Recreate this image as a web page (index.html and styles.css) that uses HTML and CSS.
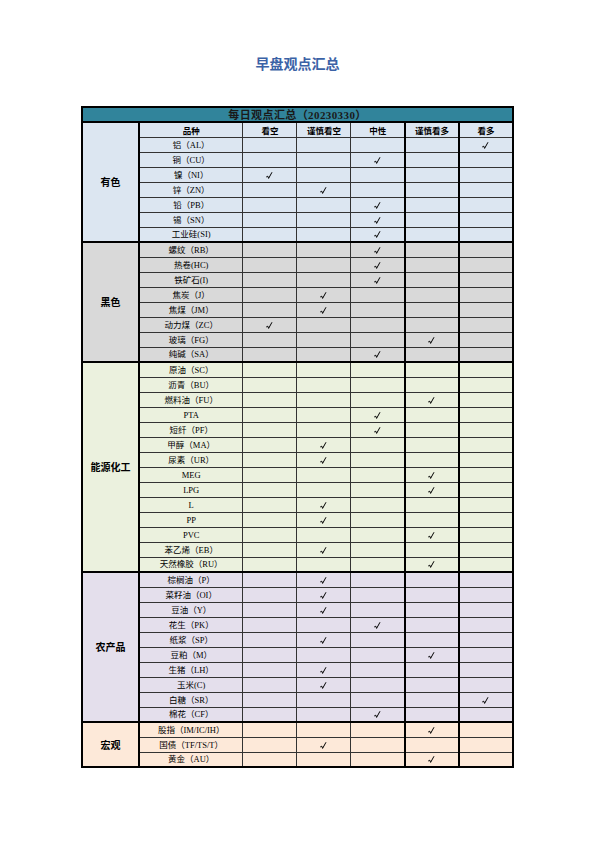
FILE: index.html
```html
<!DOCTYPE html>
<html lang="zh">
<head>
<meta charset="utf-8">
<title>早盘观点汇总</title>
<link rel="stylesheet" href="styles.css">
</head>
<body>
<div class="page">
  <h1 class="title">早盘观点汇总</h1>
  <table class="sheet">
    <colgroup>
      <col class="c-cat"><col class="c-name"><col class="c-v"><col class="c-v"><col class="c-v"><col class="c-v"><col class="c-v">
    </colgroup>
    <tr class="bar"><td colspan="7">每日观点汇总（20230330）</td></tr>
    <tr class="g1 head">
      <td class="cat" rowspan="8">有色</td>
      <td>品种</td><td>看空</td><td>谨慎看空</td><td class="bl">中性</td><td class="bk">谨慎看多</td><td class="bk">看多</td>
    </tr>
    <tr class="g1"><td class="name">铝（AL）</td><td></td><td></td><td class="bl"></td><td class="bk"></td><td class="bk"><svg class="ck" viewBox="0 0 7 7"><path d="M0.6 4.8L1.8 4.2L2.6 6.4L5.8 0.6"/></svg></td></tr>
    <tr class="g1"><td class="name">铜（CU）</td><td></td><td></td><td class="bl"><svg class="ck" viewBox="0 0 7 7"><path d="M0.6 4.8L1.8 4.2L2.6 6.4L5.8 0.6"/></svg></td><td class="bk"></td><td class="bk"></td></tr>
    <tr class="g1"><td class="name">镍（NI）</td><td><svg class="ck" viewBox="0 0 7 7"><path d="M0.6 4.8L1.8 4.2L2.6 6.4L5.8 0.6"/></svg></td><td></td><td class="bl"></td><td class="bk"></td><td class="bk"></td></tr>
    <tr class="g1"><td class="name">锌（ZN）</td><td></td><td><svg class="ck" viewBox="0 0 7 7"><path d="M0.6 4.8L1.8 4.2L2.6 6.4L5.8 0.6"/></svg></td><td class="bl"></td><td class="bk"></td><td class="bk"></td></tr>
    <tr class="g1"><td class="name">铅（PB）</td><td></td><td></td><td class="bl"><svg class="ck" viewBox="0 0 7 7"><path d="M0.6 4.8L1.8 4.2L2.6 6.4L5.8 0.6"/></svg></td><td class="bk"></td><td class="bk"></td></tr>
    <tr class="g1"><td class="name">锡（SN）</td><td></td><td></td><td class="bl"><svg class="ck" viewBox="0 0 7 7"><path d="M0.6 4.8L1.8 4.2L2.6 6.4L5.8 0.6"/></svg></td><td class="bk"></td><td class="bk"></td></tr>
    <tr class="g1"><td class="name">工业硅(SI)</td><td></td><td></td><td class="bl"><svg class="ck" viewBox="0 0 7 7"><path d="M0.6 4.8L1.8 4.2L2.6 6.4L5.8 0.6"/></svg></td><td class="bk"></td><td class="bk"></td></tr>

    <tr class="g2 first"><td class="cat" rowspan="8">黑色</td><td class="name">螺纹（RB）</td><td></td><td></td><td class="bl"><svg class="ck" viewBox="0 0 7 7"><path d="M0.6 4.8L1.8 4.2L2.6 6.4L5.8 0.6"/></svg></td><td class="bk"></td><td class="bk"></td></tr>
    <tr class="g2"><td class="name">热卷(HC)</td><td></td><td></td><td class="bl"><svg class="ck" viewBox="0 0 7 7"><path d="M0.6 4.8L1.8 4.2L2.6 6.4L5.8 0.6"/></svg></td><td class="bk"></td><td class="bk"></td></tr>
    <tr class="g2"><td class="name">铁矿石(I)</td><td></td><td></td><td class="bl"><svg class="ck" viewBox="0 0 7 7"><path d="M0.6 4.8L1.8 4.2L2.6 6.4L5.8 0.6"/></svg></td><td class="bk"></td><td class="bk"></td></tr>
    <tr class="g2"><td class="name">焦炭（J）</td><td></td><td><svg class="ck" viewBox="0 0 7 7"><path d="M0.6 4.8L1.8 4.2L2.6 6.4L5.8 0.6"/></svg></td><td class="bl"></td><td class="bk"></td><td class="bk"></td></tr>
    <tr class="g2"><td class="name">焦煤（JM）</td><td></td><td><svg class="ck" viewBox="0 0 7 7"><path d="M0.6 4.8L1.8 4.2L2.6 6.4L5.8 0.6"/></svg></td><td class="bl"></td><td class="bk"></td><td class="bk"></td></tr>
    <tr class="g2"><td class="name">动力煤（ZC）</td><td><svg class="ck" viewBox="0 0 7 7"><path d="M0.6 4.8L1.8 4.2L2.6 6.4L5.8 0.6"/></svg></td><td></td><td class="bl"></td><td class="bk"></td><td class="bk"></td></tr>
    <tr class="g2"><td class="name">玻璃（FG）</td><td></td><td></td><td class="bl"></td><td class="bk"><svg class="ck" viewBox="0 0 7 7"><path d="M0.6 4.8L1.8 4.2L2.6 6.4L5.8 0.6"/></svg></td><td class="bk"></td></tr>
    <tr class="g2"><td class="name">纯碱（SA）</td><td></td><td></td><td class="bl"><svg class="ck" viewBox="0 0 7 7"><path d="M0.6 4.8L1.8 4.2L2.6 6.4L5.8 0.6"/></svg></td><td class="bk"></td><td class="bk"></td></tr>

    <tr class="g3 first"><td class="cat" rowspan="14">能源化工</td><td class="name">原油（SC）</td><td></td><td></td><td class="bl"></td><td class="bk"></td><td class="bk"></td></tr>
    <tr class="g3"><td class="name">沥青（BU）</td><td></td><td></td><td class="bl"></td><td class="bk"></td><td class="bk"></td></tr>
    <tr class="g3"><td class="name">燃料油（FU）</td><td></td><td></td><td class="bl"></td><td class="bk"><svg class="ck" viewBox="0 0 7 7"><path d="M0.6 4.8L1.8 4.2L2.6 6.4L5.8 0.6"/></svg></td><td class="bk"></td></tr>
    <tr class="g3"><td class="name">PTA</td><td></td><td></td><td class="bl"><svg class="ck" viewBox="0 0 7 7"><path d="M0.6 4.8L1.8 4.2L2.6 6.4L5.8 0.6"/></svg></td><td class="bk"></td><td class="bk"></td></tr>
    <tr class="g3"><td class="name">短纤（PF）</td><td></td><td></td><td class="bl"><svg class="ck" viewBox="0 0 7 7"><path d="M0.6 4.8L1.8 4.2L2.6 6.4L5.8 0.6"/></svg></td><td class="bk"></td><td class="bk"></td></tr>
    <tr class="g3"><td class="name">甲醇（MA）</td><td></td><td><svg class="ck" viewBox="0 0 7 7"><path d="M0.6 4.8L1.8 4.2L2.6 6.4L5.8 0.6"/></svg></td><td class="bl"></td><td class="bk"></td><td class="bk"></td></tr>
    <tr class="g3"><td class="name">尿素（UR）</td><td></td><td><svg class="ck" viewBox="0 0 7 7"><path d="M0.6 4.8L1.8 4.2L2.6 6.4L5.8 0.6"/></svg></td><td class="bl"></td><td class="bk"></td><td class="bk"></td></tr>
    <tr class="g3"><td class="name">MEG</td><td></td><td></td><td class="bl"></td><td class="bk"><svg class="ck" viewBox="0 0 7 7"><path d="M0.6 4.8L1.8 4.2L2.6 6.4L5.8 0.6"/></svg></td><td class="bk"></td></tr>
    <tr class="g3"><td class="name">LPG</td><td></td><td></td><td class="bl"></td><td class="bk"><svg class="ck" viewBox="0 0 7 7"><path d="M0.6 4.8L1.8 4.2L2.6 6.4L5.8 0.6"/></svg></td><td class="bk"></td></tr>
    <tr class="g3"><td class="name">L</td><td></td><td><svg class="ck" viewBox="0 0 7 7"><path d="M0.6 4.8L1.8 4.2L2.6 6.4L5.8 0.6"/></svg></td><td class="bl"></td><td class="bk"></td><td class="bk"></td></tr>
    <tr class="g3"><td class="name">PP</td><td></td><td><svg class="ck" viewBox="0 0 7 7"><path d="M0.6 4.8L1.8 4.2L2.6 6.4L5.8 0.6"/></svg></td><td class="bl"></td><td class="bk"></td><td class="bk"></td></tr>
    <tr class="g3"><td class="name">PVC</td><td></td><td></td><td class="bl"></td><td class="bk"><svg class="ck" viewBox="0 0 7 7"><path d="M0.6 4.8L1.8 4.2L2.6 6.4L5.8 0.6"/></svg></td><td class="bk"></td></tr>
    <tr class="g3"><td class="name">苯乙烯（EB）</td><td></td><td><svg class="ck" viewBox="0 0 7 7"><path d="M0.6 4.8L1.8 4.2L2.6 6.4L5.8 0.6"/></svg></td><td class="bl"></td><td class="bk"></td><td class="bk"></td></tr>
    <tr class="g3"><td class="name">天然橡胶（RU）</td><td></td><td></td><td class="bl"></td><td class="bk"><svg class="ck" viewBox="0 0 7 7"><path d="M0.6 4.8L1.8 4.2L2.6 6.4L5.8 0.6"/></svg></td><td class="bk"></td></tr>

    <tr class="g4 first"><td class="cat" rowspan="10">农产品</td><td class="name">棕榈油（P）</td><td></td><td><svg class="ck" viewBox="0 0 7 7"><path d="M0.6 4.8L1.8 4.2L2.6 6.4L5.8 0.6"/></svg></td><td class="bl"></td><td class="bk"></td><td class="bk"></td></tr>
    <tr class="g4"><td class="name">菜籽油（OI）</td><td></td><td><svg class="ck" viewBox="0 0 7 7"><path d="M0.6 4.8L1.8 4.2L2.6 6.4L5.8 0.6"/></svg></td><td class="bl"></td><td class="bk"></td><td class="bk"></td></tr>
    <tr class="g4"><td class="name">豆油（Y）</td><td></td><td><svg class="ck" viewBox="0 0 7 7"><path d="M0.6 4.8L1.8 4.2L2.6 6.4L5.8 0.6"/></svg></td><td class="bl"></td><td class="bk"></td><td class="bk"></td></tr>
    <tr class="g4"><td class="name">花生（PK）</td><td></td><td></td><td class="bl"><svg class="ck" viewBox="0 0 7 7"><path d="M0.6 4.8L1.8 4.2L2.6 6.4L5.8 0.6"/></svg></td><td class="bk"></td><td class="bk"></td></tr>
    <tr class="g4"><td class="name">纸浆（SP）</td><td></td><td><svg class="ck" viewBox="0 0 7 7"><path d="M0.6 4.8L1.8 4.2L2.6 6.4L5.8 0.6"/></svg></td><td class="bl"></td><td class="bk"></td><td class="bk"></td></tr>
    <tr class="g4"><td class="name">豆粕（M）</td><td></td><td></td><td class="bl"></td><td class="bk"><svg class="ck" viewBox="0 0 7 7"><path d="M0.6 4.8L1.8 4.2L2.6 6.4L5.8 0.6"/></svg></td><td class="bk"></td></tr>
    <tr class="g4"><td class="name">生猪（LH）</td><td></td><td><svg class="ck" viewBox="0 0 7 7"><path d="M0.6 4.8L1.8 4.2L2.6 6.4L5.8 0.6"/></svg></td><td class="bl"></td><td class="bk"></td><td class="bk"></td></tr>
    <tr class="g4"><td class="name">玉米(C)</td><td></td><td><svg class="ck" viewBox="0 0 7 7"><path d="M0.6 4.8L1.8 4.2L2.6 6.4L5.8 0.6"/></svg></td><td class="bl"></td><td class="bk"></td><td class="bk"></td></tr>
    <tr class="g4"><td class="name">白糖（SR）</td><td></td><td></td><td class="bl"></td><td class="bk"></td><td class="bk"><svg class="ck" viewBox="0 0 7 7"><path d="M0.6 4.8L1.8 4.2L2.6 6.4L5.8 0.6"/></svg></td></tr>
    <tr class="g4"><td class="name">棉花（CF）</td><td></td><td></td><td class="bl"><svg class="ck" viewBox="0 0 7 7"><path d="M0.6 4.8L1.8 4.2L2.6 6.4L5.8 0.6"/></svg></td><td class="bk"></td><td class="bk"></td></tr>

    <tr class="g5 first"><td class="cat" rowspan="3">宏观</td><td class="name">股指（IM/IC/IH）</td><td></td><td></td><td class="bl"></td><td class="bk"><svg class="ck" viewBox="0 0 7 7"><path d="M0.6 4.8L1.8 4.2L2.6 6.4L5.8 0.6"/></svg></td><td class="bk"></td></tr>
    <tr class="g5"><td class="name">国债（TF/TS/T）</td><td></td><td><svg class="ck" viewBox="0 0 7 7"><path d="M0.6 4.8L1.8 4.2L2.6 6.4L5.8 0.6"/></svg></td><td class="bl"></td><td class="bk"></td><td class="bk"></td></tr>
    <tr class="g5 last"><td class="name">黄金（AU）</td><td></td><td></td><td class="bl"></td><td class="bk"><svg class="ck" viewBox="0 0 7 7"><path d="M0.6 4.8L1.8 4.2L2.6 6.4L5.8 0.6"/></svg></td><td class="bk"></td></tr>
  </table>
</div>
</body>
</html>
```

FILE: styles.css
```css
html, body {
  margin: 0;
  padding: 0;
  background: #ffffff;
}

.page {
  width: 595px;
  padding-top: 54px;
  font-family: "Liberation Serif", "Noto Sans CJK SC", serif;
  color: #000;
}

.title {
  margin: 0;
  height: 18px;
  line-height: 18px;
  font-family: "Noto Sans CJK SC", sans-serif;
  font-size: 14px;
  font-weight: 700;
  color: #3b62a6;
  text-align: center;
}

.sheet {
  margin: 34px auto 0;
  width: 431px;
  border-collapse: collapse;
  table-layout: fixed;
  border: 2px solid #000;
}

.c-cat { width: 57px; }
.c-name { width: 104px; }
.c-v { width: 54px; }

.sheet tr { height: 15px; }

.sheet td {
  padding: 0;
  border: 1px solid #333;
  text-align: center;
  vertical-align: middle;
  font-size: 8.5px;
  line-height: 10px;
  white-space: nowrap;
  overflow: hidden;
}

.sheet td.bl { border-left: 1px solid #333; }
.sheet td.bk { border-left: 2px solid #000; }

.bar td {
  background: #31849b;
  border-bottom: 2px solid #000;
  font-family: "Liberation Serif", "Noto Sans CJK SC", serif;
  font-size: 11px;
  font-weight: 700;
  color: #1a1a1a;
  letter-spacing: 0.4px;
}

.head td {
  font-family: "Noto Sans CJK SC", sans-serif;
  font-size: 8.5px;
  font-weight: 700;
}

.sheet td.cat {
  font-family: "Noto Sans CJK SC", sans-serif;
  font-size: 10px;
  font-weight: 700;
  border-right: 2px solid #000;
  border-left: 2px solid #000;
}

.first td { border-top: 2px solid #000; }

.name {
  font-family: "Liberation Serif", "Noto Sans CJK SC", serif;
}

.g1 td { background: #dce6f1; }
.g2 td { background: #d9d9d9; }
.g3 td { background: #ebf1de; }
.g4 td { background: #e4dfec; }
.g5 td { background: #fde9d9; }

.ck {
  display: block;
  width: 7px;
  height: 7px;
  margin: 1px auto 0;
}

.ck path {
  fill: none;
  stroke: #000;
  stroke-width: 1;
  stroke-linecap: round;
  stroke-linejoin: round;
}
```
